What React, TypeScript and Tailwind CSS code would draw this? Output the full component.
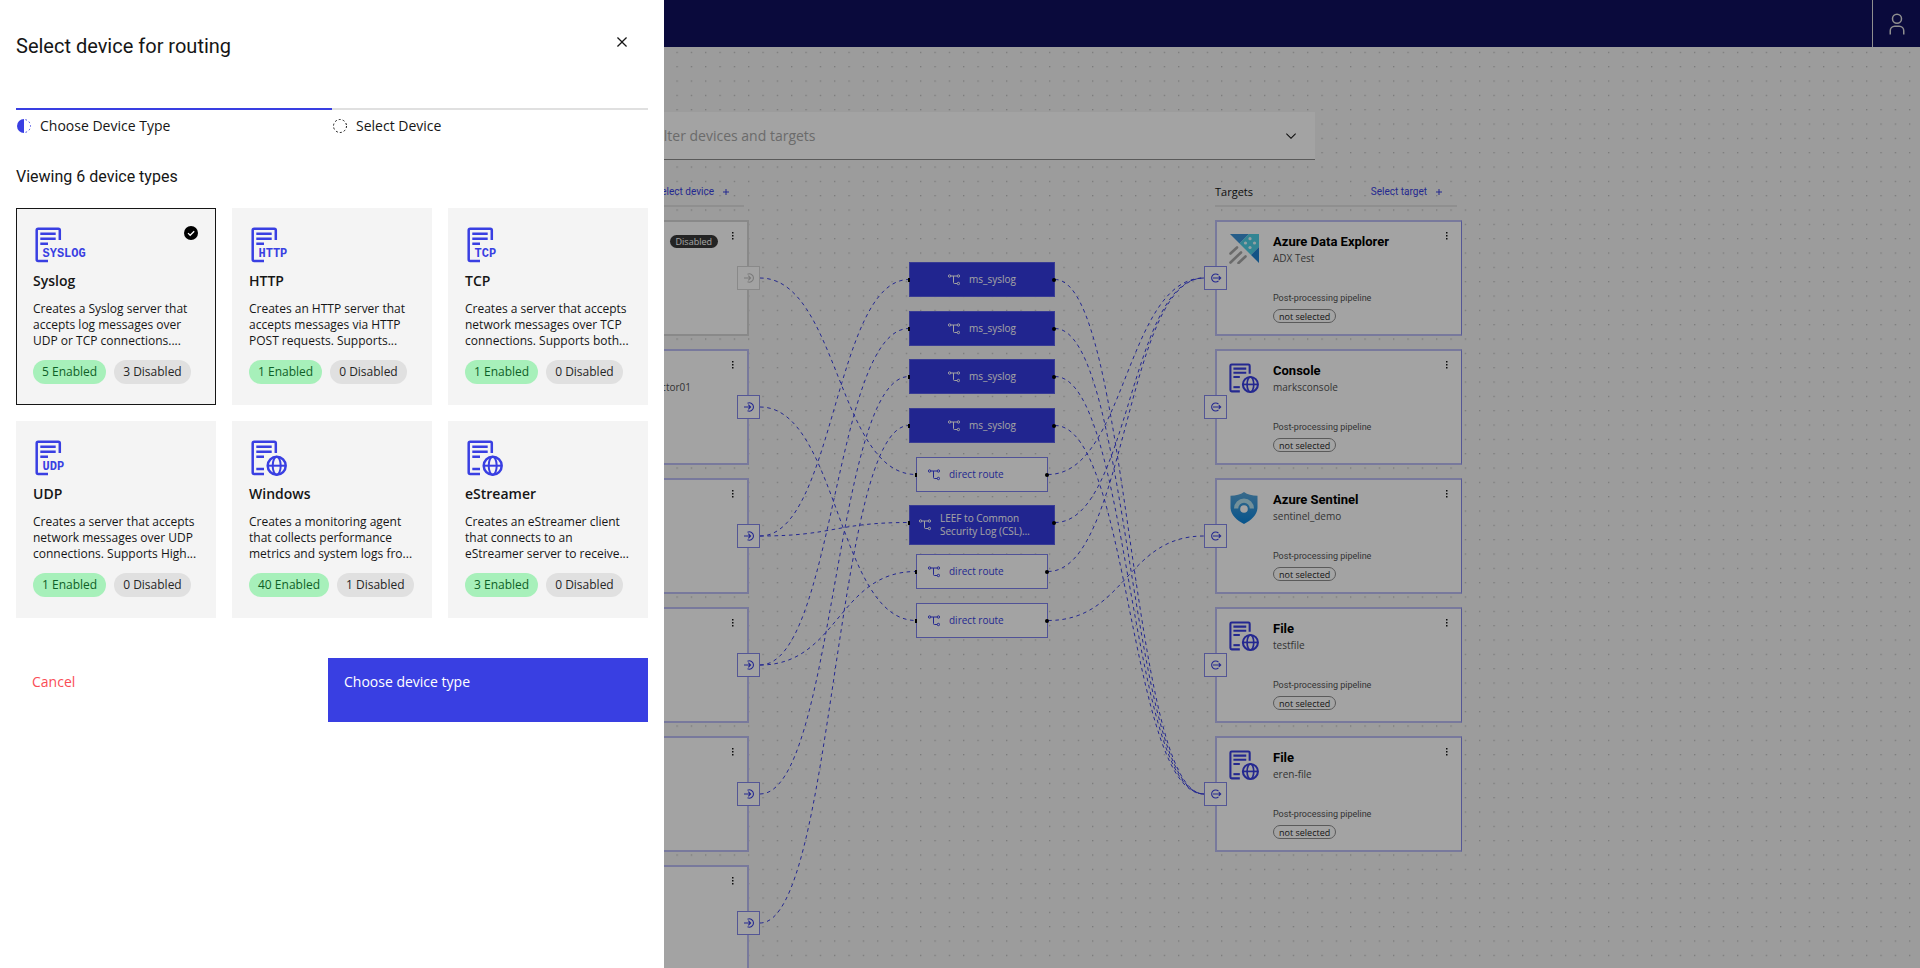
import type { ReactNode } from "react";

/* ---------- icons ---------- */

function DocIcon({ label, className }: { label?: string; className: string }) {
  return (
    <svg viewBox="0 0 36 36" className={className + " overflow-visible"} fill="none" stroke="currentColor" strokeWidth="2.5" aria-hidden="true">
      <path d="M24.8 13V3.2a1.5 1.5 0 0 0-1.5-1.5H3.2a1.5 1.5 0 0 0-1.5 1.5v29.3A1.5 1.5 0 0 0 3.2 34H13" />
      <path d="M5.3 6.7h15.4M5.3 11.7h15.4M5.3 16.7H13" />
      {label ? (
        <text x="7.5" y="29.5" fill="currentColor" stroke="none" className="font-['Liberation_Mono',monospace] text-[12px] font-bold">
          {label}
        </text>
      ) : (
        <>
          <path d="M5.3 29H13" />
          <circle cx="25.7" cy="25.7" r="9" />
          <ellipse cx="25.7" cy="25.7" rx="4" ry="9" strokeWidth="2" />
          <path d="M16.5 25.7h18.4" strokeWidth="2" />
        </>
      )}
    </svg>
  );
}

function ExplorerIcon() {
  return (
    <svg viewBox="0 0 30 30" className="size-[30px]" aria-hidden="true">
      <path d="M1 0h19l-9.500 9.500z" fill="#3b92d6" />
      <path d="M20 0h10v13l-8 8L10.500 9.500z" fill="#4fd0e6" />
      <path d="M30 13v16l-8-8z" fill="#1f83d2" />
      <g fill="#e6fbff">
        <circle cx="21" cy="4.700" r="1.600" />
        <circle cx="16.500" cy="9" r="1.600" />
        <circle cx="25.500" cy="9" r="1.600" />
        <circle cx="21" cy="13.500" r="1.600" />
      </g>
      <path d="M1.500 19.500L8 13.500M1.500 28.500L12 18.500M9.500 29L16.500 22.500" stroke="#a8a8a8" strokeWidth="2.600" strokeLinecap="round" />
    </svg>
  );
}

function SentinelIcon() {
  return (
    <svg viewBox="0 0 30 32" className="h-8 w-[30px]" aria-hidden="true">
      <defs>
        <linearGradient id="shield" x1="0" y1="0" x2="0" y2="1">
          <stop offset="0" stopColor="#5aa6d8" />
          <stop offset="1" stopColor="#0a84dc" />
        </linearGradient>
      </defs>
      <path d="M15 0c3.500 2.600 8 3.600 13.500 3.700V15c0 8-6 13-13.500 17C7.500 28 1.500 23 1.500 15V3.700C7 3.600 11.500 2.600 15 0z" fill="url(#shield)" />
      <path d="M5 16.500a10 10 0 0 1 20 0h-4.200a5.800 5.800 0 0 0-11.600 0z" fill="#b4e2f0" />
      <circle cx="15" cy="17" r="3.800" fill="#fff" />
    </svg>
  );
}

function RouteIcon() {
  return (
    <svg viewBox="0 0 12 12" className="size-3 shrink-0" fill="none" stroke="currentColor" strokeWidth="1" aria-hidden="true">
      <circle cx="1.600" cy="2" r="1.200" />
      <circle cx="10.400" cy="2" r="1.200" />
      <circle cx="10.400" cy="9.500" r="1.200" />
      <path d="M2.800 2h6.400M5.500 2v6.500a1 1 0 0 0 1 1h2.700" />
    </svg>
  );
}

function InIcon() {
  return (
    <svg viewBox="0 0 12 12" className="size-3" fill="none" stroke="currentColor" strokeWidth="1.1" aria-hidden="true">
      <path d="M4.500 2.200A4.200 4.200 0 1 1 4.500 9.800M1 6h6.500M5.300 3.700L7.600 6 5.300 8.300" />
    </svg>
  );
}

function OutIcon() {
  return (
    <svg viewBox="0 0 12 12" className="size-3" fill="none" stroke="currentColor" strokeWidth="1.1" aria-hidden="true">
      <path d="M8.500 3.200A4 4 0 1 0 8.500 8.800M3 6h7.600M8.800 4.200L10.700 6 8.800 7.800" />
    </svg>
  );
}

function Kebab() {
  return (
    <button type="button" aria-label="More actions" className="absolute right-[11px] top-[9px] flex w-1.5 flex-col items-center text-[#161616]">
      <svg viewBox="0 0 4 10" className="h-2.5 w-1" fill="currentColor" aria-hidden="true">
        <rect x="1" y="1" width="1.500" height="1.500" />
        <rect x="1" y="4" width="1.500" height="1.500" />
        <rect x="1" y="7" width="1.500" height="1.500" />
      </svg>
    </button>
  );
}

/* ---------- canvas data ---------- */

const rows = [220, 349, 478, 607, 736, 865];

const devices = [
  { top: rows[0], disabled: true, name: "" },
  { top: rows[1], disabled: false, name: "collector01" },
  { top: rows[2], disabled: false, name: "" },
  { top: rows[3], disabled: false, name: "" },
  { top: rows[4], disabled: false, name: "" },
  { top: rows[5], disabled: false, name: "" },
];

const doc = <DocIcon className="size-[30px] text-[#393fe2]" />;

const targets: { title: string; name: string; icon: ReactNode }[] = [
  { title: "Azure Data Explorer", name: "ADX Test", icon: <ExplorerIcon /> },
  { title: "Console", name: "marksconsole", icon: doc },
  { title: "Azure Sentinel", name: "sentinel_demo", icon: <SentinelIcon /> },
  { title: "File", name: "testfile", icon: doc },
  { title: "File", name: "eren-file", icon: doc },
];

type Route = { top: number; kind: "pipeline" | "direct" | "wide"; label: string };

const routes: Route[] = [
  { top: 262, kind: "pipeline", label: "ms_syslog" },
  { top: 311, kind: "pipeline", label: "ms_syslog" },
  { top: 359, kind: "pipeline", label: "ms_syslog" },
  { top: 408, kind: "pipeline", label: "ms_syslog" },
  { top: 457, kind: "direct", label: "direct route" },
  { top: 505, kind: "wide", label: "LEEF to Common Security Log (CSL)…" },
  { top: 554, kind: "direct", label: "direct route" },
  { top: 603, kind: "direct", label: "direct route" },
];

/* [device index, route index] and [route index, target index] */
const inbound = [[0, 4], [1, 7], [2, 0], [2, 5], [3, 1], [3, 6], [4, 2], [5, 3]];
const outbound = [[0, 4], [1, 4], [2, 4], [3, 4], [4, 0], [5, 0], [6, 0], [7, 2]];

const routeLeft = (r: Route) => (r.kind === "direct" ? 916 : 909);
const routeRight = (r: Route) => (r.kind === "direct" ? 1048 : 1055);
const routeY = (r: Route) => r.top + 17.5;

function curve(x1: number, y1: number, x2: number, y2: number) {
  const mid = (x1 + x2) / 2;
  return `M${x1} ${y1}C${mid} ${y1} ${mid} ${y2} ${x2} ${y2}`;
}

function Edges() {
  return (
    <svg className="absolute inset-0 size-full" aria-hidden="true">
      <defs>
        <pattern id="dots" x="2.800" y="8.800" width="14.333" height="14.333" patternUnits="userSpaceOnUse">
          <circle cx="0.700" cy="0.700" r="0.600" fill="#a0a0a0" />
        </pattern>
      </defs>
      <rect width="100%" height="100%" fill="url(#dots)" />
      <g fill="none" stroke="#393fe2" strokeWidth="1" strokeDasharray="3.600 3.600">
        {inbound.map(([d, r]) => (
          <path key={`in-${d}-${r}`} d={curve(760, rows[d] + 58, routeLeft(routes[r]), routeY(routes[r]))} />
        ))}
        {outbound.map(([r, t]) => (
          <path key={`out-${r}-${t}`} d={curve(routeRight(routes[r]), routeY(routes[r]), 1204, rows[t] + 58)} />
        ))}
      </g>
    </svg>
  );
}

function RouteNode({ route }: { route: Route }) {
  return (
    <div
      className={
        "absolute flex items-center border " +
        (route.kind === "pipeline"
          ? "h-[35px] w-[146px] justify-center gap-[9px] border-[#5a5ee8] bg-[#353ae0] text-white"
          : route.kind === "wide"
            ? "h-10 w-[146px] gap-[9px] border-[#5a5ee8] bg-[#353ae0] pl-[9px] text-white"
            : "h-[35px] w-[132px] gap-[9px] border-[#7d80ec] bg-white pl-[11px] text-[#393fe2]")
      }
      style={{ left: routeLeft(route), top: route.top }}
    >
      <RouteIcon />
      <span className="whitespace-nowrap text-[10px] leading-[13px]">
        {route.kind === "wide" ? (
          <>
            LEEF to Common
            <br />
            Security Log (CSL)…
          </>
        ) : (
          route.label
        )}
      </span>
      <i className="absolute -left-0.5 top-[15px] h-1 w-0.5 bg-black" />
      <i className="absolute -right-0.5 top-[15px] size-1 rounded-full bg-black" />
    </div>
  );
}

function ColumnHead({ title, action, left }: { title: string; action: string; left: number }) {
  return (
    <div className="absolute top-[182px] flex h-[25px] w-[242px] items-start justify-between border-b-2 border-[#e0e0e0] pr-[14px]" style={{ left }}>
      <h2 className="text-[11px] leading-5 text-[#161616]">{title}</h2>
      <button type="button" className="flex items-center gap-2 font-['Roboto',sans-serif] text-[10px] leading-5 text-[#393fe2]">
        {action}
        <svg viewBox="0 0 8 8" className="size-2" stroke="currentColor" aria-hidden="true">
          <path d="M1 4h6M4 1v6" />
        </svg>
      </button>
    </div>
  );
}

function Canvas() {
  return (
    <div className="absolute inset-0 overflow-hidden">
      <Edges />
      <ColumnHead title="Devices" action="Select device" left={502} />
      <ColumnHead title="Targets" action="Select target" left={1215} />

      {devices.map((d) => (
        <section
          key={d.top}
          className={"absolute left-[502px] h-[116px] w-[247px] border-2 bg-white " + (d.disabled ? "border-[#d6d6d6]" : "border-[#bcbdf4]")}
          style={{ top: d.top }}
        >
          {d.disabled && (
            <span className="absolute right-[29px] top-[13px] flex h-[13px] items-center rounded-full bg-[#393939] px-1.5 text-[9px] leading-none text-white">
              Disabled
            </span>
          )}
          {d.name && <p className="pr-14 pt-7 text-right text-[10px] leading-4 text-[#525252]">{d.name}</p>}
          <Kebab />
          <span
            className={
              "absolute -right-[13px] top-11 flex h-6 w-[23px] items-center justify-center border bg-white " +
              (d.disabled ? "border-[#d6d6d6] text-[#c0c0c0]" : "border-[#8487ea] text-[#393fe2]")
            }
          >
            <InIcon />
          </span>
        </section>
      ))}

      {routes.map((r) => (
        <RouteNode key={r.top} route={r} />
      ))}

      {targets.map((t, i) => (
        <section
          key={t.name}
          className="absolute left-[1215px] flex h-[116px] w-[247px] gap-[14px] border-2 border-r border-[#bcbdf4] border-r-[#8487ea] bg-white pl-3 pt-3"
          style={{ top: rows[i] }}
        >
          {t.icon}
          <div className="flex flex-col items-start">
            <h3 className="font-['Roboto',sans-serif] text-[13px] font-bold leading-4 text-black">{t.title}</h3>
            <p className="text-[10px] leading-4 text-[#525252]">{t.name}</p>
            <p className="mt-[26px] font-['Roboto',sans-serif] text-[9px] leading-3 text-[#525252]">Post-processing pipeline</p>
            <span className="mt-[5px] flex h-3.5 items-center rounded-full border border-[#8d8d8d] px-[5px] text-[9px] leading-none text-[#262626]">
              not selected
            </span>
          </div>
          <Kebab />
          <span className="absolute -left-[13px] top-11 flex h-6 w-[23px] items-center justify-center border border-[#8487ea] bg-white text-[#393fe2]">
            <OutIcon />
          </span>
        </section>
      ))}
    </div>
  );
}

/* ---------- side panel ---------- */

const deviceTypes = [
  { name: "Syslog", label: "SYSLOG", lines: ["Creates a Syslog server that", "accepts log messages over", "UDP or TCP connections...."], on: 5, off: 3 },
  { name: "HTTP", label: "HTTP", lines: ["Creates an HTTP server that", "accepts messages via HTTP", "POST requests. Supports..."], on: 1, off: 0 },
  { name: "TCP", label: "TCP", lines: ["Creates a server that accepts", "network messages over TCP", "connections. Supports both..."], on: 1, off: 0 },
  { name: "UDP", label: "UDP", lines: ["Creates a server that accepts", "network messages over UDP", "connections. Supports High..."], on: 1, off: 0 },
  { name: "Windows", lines: ["Creates a monitoring agent", "that collects performance", "metrics and system logs fro..."], on: 40, off: 1 },
  { name: "eStreamer", lines: ["Creates an eStreamer client", "that connects to an", "eStreamer server to receive..."], on: 3, off: 0 },
];

function Panel() {
  return (
    <aside className="absolute inset-y-0 left-0 w-[664px] bg-white px-4 text-[#161616]">
      <header className="flex h-[108px] items-start justify-between pt-8">
        <h1 className="font-['Roboto',sans-serif] text-xl leading-7">Select device for routing</h1>
        <button type="button" aria-label="Close" className="mr-4 flex size-5 items-center justify-center">
          <svg viewBox="0 0 32 32" className="size-5" fill="currentColor" aria-hidden="true">
            <path d="M17.414 16L24 9.414 22.586 8 16 14.586 9.414 8 8 9.414 14.586 16 8 22.586 9.414 24 16 17.414 22.586 24 24 22.586z" />
          </svg>
        </button>
      </header>

      <ol className="grid grid-cols-2">
        <li className="flex items-center gap-2 border-t-2 border-[#393fe2] pt-1.5 text-sm leading-5">
          <svg viewBox="0 0 16 16" className="size-4" aria-hidden="true">
            <path d="M8 1a7 7 0 0 0 0 14z" fill="#393fe2" />
            <path d="M8 1.500a6.500 6.500 0 0 1 0 13" fill="none" stroke="#393fe2" strokeDasharray="1.600 2.200" strokeDashoffset="-1.500" />
          </svg>
          Choose Device Type
        </li>
        <li className="flex items-center gap-2 border-t-2 border-[#e0e0e0] pt-1.5 text-sm leading-5">
          <svg viewBox="0 0 16 16" className="size-4" aria-hidden="true">
            <circle cx="8" cy="8" r="6.500" fill="none" stroke="#161616" strokeDasharray="2 2.080" />
          </svg>
          Select Device
        </li>
      </ol>

      <h2 className="mt-[29px] font-['Roboto',sans-serif] text-base leading-6">Viewing 6 device types</h2>

      <div className="mt-[19px] grid grid-cols-3 gap-4">
        {deviceTypes.map((t, i) => (
          <button
            key={t.name}
            type="button"
            aria-pressed={i === 0}
            className={"relative flex flex-col items-start border bg-[#f4f4f4] px-4 pb-5 pt-[18px] text-left " + (i === 0 ? "border-[#161616]" : "border-[#f4f4f4]")}
          >
            <DocIcon label={t.label} className="ml-0.5 size-9 text-[#393fe2]" />
            {i === 0 && (
              <svg viewBox="0 0 14 14" className="absolute right-[17px] top-[17px] size-3.5" aria-hidden="true">
                <circle cx="7" cy="7" r="7" fill="#000" />
                <path d="M4 7.100l2.200 2.200L10.200 5.300" fill="none" stroke="#fff" strokeWidth="1.300" />
              </svg>
            )}
            <span className="mt-[9px] text-sm font-semibold leading-[18px]">{t.name}</span>
            <span className="mt-[11px] whitespace-nowrap text-xs leading-4">
              {t.lines.map((l) => (
                <span key={l} className="block">
                  {l}
                </span>
              ))}
            </span>
            <span className="mt-[11px] flex gap-2 whitespace-nowrap text-xs leading-6">
              <span className="rounded-full bg-[#a7f0ba] px-[9px] text-[#0e6027]">{t.on} Enabled</span>
              <span className="rounded-full bg-[#e0e0e0] px-[9px] text-[#262626]">{t.off} Disabled</span>
            </span>
          </button>
        ))}
      </div>

      <footer className="mt-10 flex h-16">
        <button type="button" className="flex flex-1 items-start px-4 pt-3.5 text-sm leading-5 text-[#fa4d56]">
          Cancel
        </button>
        <button type="button" className="flex w-80 items-start bg-[#393fe2] px-4 pt-3.5 text-sm leading-5 text-white">
          Choose device type
        </button>
      </footer>
    </aside>
  );
}

export default function App() {
  return (
    <div className="relative h-screen overflow-hidden bg-[#f4f4f4] font-['Open_Sans',sans-serif]">
      <Canvas />
      <header className="relative flex h-[47px] justify-end bg-[#11105f]">
        <button type="button" aria-label="Account" className="flex w-12 items-center justify-center border-l border-[#e0e0e0] text-[#e0e0e0]">
          <svg viewBox="0 0 32 32" className="size-6" fill="currentColor" aria-hidden="true">
            <path d="M16 4a5 5 0 1 1-5 5 5 5 0 0 1 5-5m0-2a7 7 0 1 0 7 7A7 7 0 0 0 16 2zM26 30H24V25a5 5 0 0 0-5-5H13a5 5 0 0 0-5 5v5H6V25a7 7 0 0 1 7-7h6a7 7 0 0 1 7 7z" />
          </svg>
        </button>
      </header>
      <div className="relative mx-auto mt-[65px] flex h-12 w-[710px] items-center border-b border-[#8d8d8d] bg-white pl-12 pr-4">
        <input
          type="text"
          aria-label="Filter devices and targets"
          placeholder="Filter devices and targets"
          className="flex-1 text-sm outline-none placeholder:text-[#a8a8a8]"
        />
        <svg viewBox="0 0 16 16" className="size-4 text-[#161616]" fill="currentColor" aria-hidden="true">
          <path d="M8 11L3 6l.7-.7L8 9.600l4.300-4.300.7.7z" />
        </svg>
      </div>
      <div className="absolute inset-0 bg-black/36" />
      <Panel />
    </div>
  );
}
